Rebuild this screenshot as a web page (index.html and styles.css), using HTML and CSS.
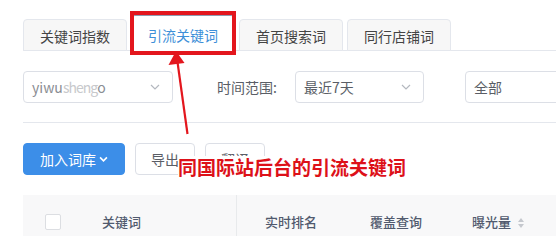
FILE: index.html
```html
<!DOCTYPE html>
<html lang="zh">
<head>
<meta charset="utf-8">
<link rel="stylesheet" href="styles.css">
</head>
<body>
<div class="page">
  <div class="tabs">
    <div class="tab">关键词指数</div>
    <div class="tab active">引流关键词</div>
    <div class="tab">首页搜索词</div>
    <div class="tab">同行店铺词</div>
  </div>

  <div class="filters">
    <div class="select s1"><span class="val">yiwu<span class="blur">sheng</span>o</span><svg class="chev" viewBox="0 0 10 6" width="10" height="6"><path d="M1 1l4 4 4-4" fill="none" stroke="#b4b8bf" stroke-width="1.2"/></svg></div>
    <span class="label">时间范围:</span>
    <div class="select s2"><span class="val">最近7天</span><svg class="chev" viewBox="0 0 10 6" width="10" height="6"><path d="M1 1l4 4 4-4" fill="none" stroke="#b4b8bf" stroke-width="1.2"/></svg></div>
    <div class="select s3"><span class="val">全部</span></div>
  </div>

  <div class="divider"></div>

  <div class="actions">
    <div class="btn primary">加入词库<svg class="bchev" viewBox="0 0 10 7" width="9" height="7"><path d="M1.2 1.2l3.8 3.8 3.8-3.8" fill="none" stroke="#fff" stroke-width="1.8"/></svg></div>
    <div class="btn">导出</div>
    <div class="btn">翻译</div>
  </div>

  <div class="thead">
    <div class="cell fixed"><span class="checkbox"></span><span class="kw">关键词</span></div>
    <div class="cell c2">实时排名</div>
    <div class="cell c3">覆盖查询</div>
    <div class="cell c4">曝光量<svg class="sort" viewBox="0 0 8 12" width="8" height="12"><path d="M4 1l3 4H1z" fill="#c5c8ce"/><path d="M4 11l3-4H1z" fill="#c5c8ce"/></svg></div>
  </div>

  <div class="redbox"></div>
  <svg class="arrow" width="556" height="236" viewBox="0 0 556 236">
    <line x1="187.5" y1="134" x2="177.5" y2="62" stroke="#e3161d" stroke-width="2.2"/>
    <polygon points="176,51 168.5,65 184.5,63" fill="#e3161d"/>
  </svg>
  <div class="note">同国际站后台的引流关键词</div>
</div>
</body>
</html>
```

FILE: styles.css
```css
* { box-sizing: border-box; }
html, body { margin: 0; padding: 0; background: #fff; }
body {
  font-family: "Noto Sans CJK SC", "Liberation Sans", sans-serif;
  color: #606266;
  width: 556px;
  height: 236px;
  overflow: hidden;
}
.page {
  position: relative;
  width: 556px;
  height: 236px;
  padding-left: 23px;
  overflow: hidden;
}
.tabs {
  display: flex;
  align-items: flex-end;
  gap: 4px;
  height: 51px;
  border-bottom: 1px solid #e4e7ed;
}
.tab {
  flex: none;
  width: 104px;
  height: 32px;
  margin-bottom: -1px;
  border: 1px solid #e4e7ed;
  border-radius: 4px 4px 0 0;
  background: #f7f7f7;
  font-size: 14px;
  color: #444;
  display: flex;
  align-items: center;
  justify-content: center;
  padding-top: 1px;
}
.tab.active {
  height: 36px;
  background: #fff;
  border-color: #8f9bb0;
  border-bottom-color: #fff;
  color: #3d8fd8;
  padding-top: 4px;
}
.filters {
  display: flex;
  align-items: center;
  margin-top: 20px;
  height: 32px;
}
.filters > * { flex: none; white-space: nowrap; }
.select {
  height: 32px;
  border: 1px solid #dcdfe6;
  border-radius: 4px;
  display: flex;
  align-items: center;
  justify-content: space-between;
  padding: 0 12px 0 8px;
  font-size: 14px;
  color: #5a5e66;
}
.s1 { width: 150px; }
.s1 .val { color: #8a8d93; }
.blur { color: #c8c9cc; letter-spacing: -1px; }
.s2 { width: 129px; margin-left: 18px; }
.s3 { width: 120px; margin-left: 41px; }
.label {
  margin-left: 44px;
  font-size: 14px;
  color: #5a5e66;
}
.divider {
  margin-top: 19px;
  height: 1px;
  background: #e4e7ed;
}
.actions {
  display: flex;
  gap: 10px;
  margin-top: 20px;
  height: 32px;
}
.btn {
  flex: none;
  height: 32px;
  width: 60px;
  border: 1px solid #dcdfe6;
  border-radius: 4px;
  display: flex;
  align-items: center;
  justify-content: center;
  font-size: 14px;
  color: #5a5e66;
  background: #fff;
}
.btn.primary {
  width: 102px;
  background: #3c8ee8;
  border-color: #3c8ee8;
  color: #fff;
  gap: 3px;
}
.thead {
  margin-top: 20px;
  height: 60px;
  background: #f8f8f9;
  display: grid;
  grid-template-columns: 214px 133px 102px 1fr;
  font-size: 13px;
  font-weight: 500;
  color: #515a6e;
}
.cell {
  display: flex;
  align-items: flex-start;
  height: 60px;
  padding-top: 19px;
  line-height: 16px;
  white-space: nowrap;
}
.fixed {
  border-right: 1px solid #e8eaec;
  padding-left: 22px;
}
.c2 { padding-left: 28px; }
.checkbox {
  flex: none;
  width: 16px;
  height: 16px;
  border: 1px solid #dcdee2;
  border-radius: 2px;
  background: #fff;
}
.kw { margin-left: 41px; }
.sort { margin-left: 6px; margin-top: 3px; }
.redbox {
  position: absolute;
  left: 130px;
  top: 11px;
  width: 106px;
  height: 44px;
  border: 4px solid #e3161d;
}
.arrow {
  position: absolute;
  left: 0;
  top: 0;
}
.note {
  position: absolute;
  left: 178px;
  top: 156px;
  background: #fff;
  color: #dd1119;
  font-size: 19px;
  font-weight: 700;
  line-height: 22px;
  white-space: nowrap;
}
```
